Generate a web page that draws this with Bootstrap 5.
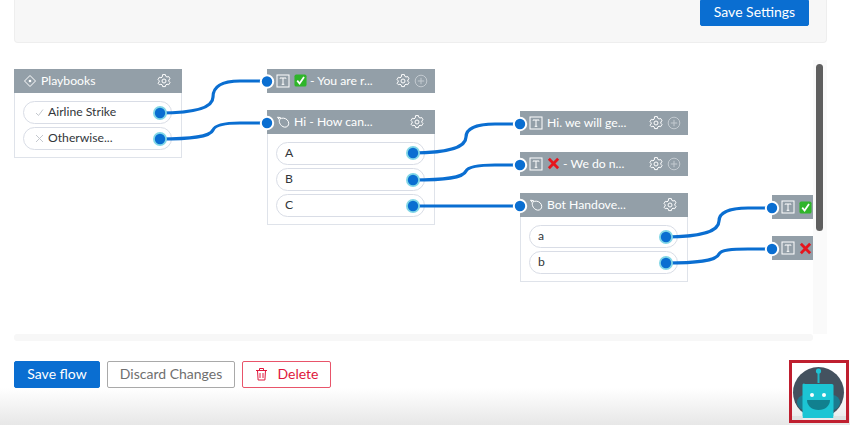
<!DOCTYPE html>
<html lang="en">
<head>
<meta charset="utf-8">
<title>Flow editor</title>
<link href="https://cdn.jsdelivr.net/npm/bootstrap@5.3.0/dist/css/bootstrap.min.css" rel="stylesheet">
<style>
html,body{height:425px;overflow:hidden}
body{font-family:Lato,"Noto Sans","Liberation Sans",sans-serif;font-size:13px;color:#32363a;position:relative;padding:0 23px 0 14px;
 background:linear-gradient(to bottom,#fff 0,#fff 388px,#e7e7e7 425px)}
.top-panel{height:43px;margin-bottom:17px;background:#f7f7f7;border:1px solid #eeeeee;border-top:0;border-radius:0 0 4px 4px;padding-right:17px}
.act-btn{height:27px;font-size:14px;line-height:1;padding:0 0 2px;border-radius:2px;display:inline-flex;align-items:center;justify-content:center;white-space:nowrap}
.act-blue{background:#0a6ed1;border:1px solid #0a6ed1;color:#fff}
.act-save{width:109px;height:26px;border-radius:0 0 2px 2px}
.act-flow{width:86px}
.act-gray{width:128px;background:#fff;border:1px solid #a9a9a9;color:#6f6f6f}
.act-red{width:89px;background:#fff;border:1px solid #e8546a;color:#e0173c;gap:10px}
.flow-row{height:274px}
.canvas-area{width:799px;height:274px;position:relative;overflow:hidden;background:#fff}
.v-track{width:14px;height:274px;background:#fafafa;padding:4px 4px 0 3px}
.v-thumb{width:7px;height:167px;background:#5f5f5f;border-radius:4px}
.h-track{width:799px;height:7px;background:#f7f7f7;margin-bottom:20px;border-radius:3px}
.fnode{position:absolute;width:168px}
.fhead{height:24px;background:#939fa8;color:#fff;font-size:12.2px;display:flex;align-items:center;padding:0 7px 0 9px;white-space:nowrap}
.fhead .ttl{flex:1;min-width:0;display:flex;align-items:center;gap:3px;margin-left:4px}
.fhead svg{flex:none}
.fbody{padding:8px 9px 7px 8px;display:flex;flex-direction:column;gap:3px;background:#fff;border:1px solid #dfe3ea;border-top:0}
.fpill{height:23px;border:1px solid #d9dde6;border-radius:12px;background:#fff;display:flex;align-items:center;padding-left:8px;font-size:12.2px;color:#32363a;line-height:1}
.fpill .ic{width:15px;margin-right:1px;color:#c4c8ce;display:flex;justify-content:center}
.n1{left:0;top:9px}.n2{left:253px;top:9px}.n3{left:253px;top:50px}
.n4{left:506px;top:51px}.n5{left:506px;top:92px}.n6{left:506px;top:133px}
.n7{left:758px;top:135px;width:60px}.n8{left:758px;top:176px;width:60px}
.wires{position:absolute;left:0;top:0;pointer-events:none}
.act-row{gap:7px}
.bot-box{position:absolute;left:789px;top:360px;width:60px;height:63px;border:3px solid #bf1f2f}
.bot-box svg{display:block}
</style>
</head>
<body>
<svg width="0" height="0" class="position-absolute">
 <defs>
  <symbol id="gear" viewBox="0 0 14 14"><path fill="none" stroke="currentColor" stroke-width="1" stroke-linejoin="round" d="M5.600 1h2.800l.4 1.700 1.200.7 1.700-.5 1.300 2.300-1.200 1.200v1.200l1.200 1.200-1.300 2.300-1.700-.5-1.200.7-.4 1.700H5.600l-.4-1.700-1.200-.7-1.700.5L1 9.600l1.200-1.200V7.200L1 6l1.300-2.300 1.700.5 1.200-.7z" transform="translate(0 -.4)"/><circle cx="7" cy="7" r="2" fill="none" stroke="currentColor"/></symbol>
  <symbol id="plus" viewBox="0 0 14 14"><circle cx="7" cy="7" r="5.800" fill="none" stroke="#c3cad0"/><path d="M7 3.800v6.400M3.800 7h6.400" stroke="#c3cad0"/></symbol>
  <symbol id="tbox" viewBox="0 0 14 14"><rect x="1" y="1" width="12" height="12" fill="none" stroke="currentColor"/><path d="M4 4.500V4h6v.5M7 4v6.300M5.700 10.300h2.600" fill="none" stroke="currentColor"/></symbol>
  <symbol id="lasso" viewBox="0 0 14 14"><path fill="none" stroke="currentColor" d="M4 4C6 2.500 9.500 3 11.300 5c1.800 2 1.900 4.700.3 6.200-1.600 1.500-4.300 1.200-6.200-.6C3.700 9 2.800 6.500 3.400 4.800L1.500 2.200l3 .4z"/></symbol>
  <symbol id="okbox" viewBox="0 0 14 14"><rect x=".5" y=".5" width="13" height="13" rx="2" fill="#2fb52a"/><path d="M3.500 7.200 6 10.200 10.800 3.300" fill="none" stroke="#fff" stroke-width="1.900"/></symbol>
  <symbol id="redx" viewBox="0 0 14 14"><path d="M2 2 12 12M12 2 2 12" stroke="#e5141c" stroke-width="3"/></symbol>
 </defs>
</svg>

<div class="top-panel d-flex justify-content-end align-items-start">
 <button class="act-btn act-blue act-save" type="button">Save Settings</button>
</div>

<div class="flow-row d-flex">
 <div class="canvas-area">
  <div class="fnode n1">
   <div class="fhead"><svg width="14" height="14" viewBox="0 0 14 14"><path d="M7 1.500 12.500 7 7 12.500 1.500 7z" fill="none" stroke="#fff"/><circle cx="7" cy="7" r="1.300" fill="#fff"/></svg><span class="ttl">Playbooks</span><svg class="me-1" width="14" height="14"><use href="#gear"/></svg></div>
   <div class="fbody">
    <div class="fpill"><span class="ic"><svg width="9" height="9" viewBox="0 0 9 9"><path d="M1 5l2.500 2.500L8 1.500" fill="none" stroke="currentColor"/></svg></span>Airline Strike</div>
    <div class="fpill"><span class="ic"><svg width="9" height="9" viewBox="0 0 9 9"><path d="M1 1l7 7M8 1 1 8" stroke="currentColor"/></svg></span>Otherwise...</div>
   </div>
  </div>
  <div class="fnode n2">
   <div class="fhead"><svg width="14" height="14"><use href="#tbox"/></svg><span class="ttl"><svg width="13" height="13"><use href="#okbox"/></svg> - You are r...</span><svg width="14" height="14"><use href="#gear"/></svg><svg class="ms-1" width="14" height="14"><use href="#plus"/></svg></div>
  </div>
  <div class="fnode n3">
   <div class="fhead"><svg width="14" height="14"><use href="#lasso"/></svg><span class="ttl">Hi - How can...</span><svg class="me-1" width="14" height="14"><use href="#gear"/></svg></div>
   <div class="fbody">
    <div class="fpill">A</div><div class="fpill">B</div><div class="fpill">C</div>
   </div>
  </div>
  <div class="fnode n4">
   <div class="fhead"><svg width="14" height="14"><use href="#tbox"/></svg><span class="ttl">Hi. we will ge...</span><svg width="14" height="14"><use href="#gear"/></svg><svg class="ms-1" width="14" height="14"><use href="#plus"/></svg></div>
  </div>
  <div class="fnode n5">
   <div class="fhead"><svg width="14" height="14"><use href="#tbox"/></svg><span class="ttl"><svg width="13" height="13"><use href="#redx"/></svg> - We do n...</span><svg width="14" height="14"><use href="#gear"/></svg><svg class="ms-1" width="14" height="14"><use href="#plus"/></svg></div>
  </div>
  <div class="fnode n6">
   <div class="fhead"><svg width="14" height="14"><use href="#lasso"/></svg><span class="ttl">Bot Handove...</span><svg class="me-1" width="14" height="14"><use href="#gear"/></svg></div>
   <div class="fbody">
    <div class="fpill">a</div><div class="fpill">b</div>
   </div>
  </div>
  <div class="fnode n7">
   <div class="fhead"><svg width="14" height="14"><use href="#tbox"/></svg><span class="ttl"><svg width="13" height="13"><use href="#okbox"/></svg></span></div>
  </div>
  <div class="fnode n8">
   <div class="fhead"><svg width="14" height="14"><use href="#tbox"/></svg><span class="ttl"><svg width="13" height="13"><use href="#redx"/></svg></span></div>
  </div>

  <svg class="wires" width="799" height="274" viewBox="14 60 799 274">
   <g fill="none" stroke="#0a6ed1" stroke-width="3.200" stroke-linecap="round">
    <path d="M160 113C195 113 213 108 213 97C213 85 225 81 240 81L267 81"/>
    <path d="M160 139C190 139 210 137 213 130C215 125 225 123 240 123L267 123"/>
    <path d="M413 153C445 153 466 148 466 137C466 128 478 124 495 124L520 124"/>
    <path d="M413 180C445 180 463 178 466 171C468 167 478 165 495 165L520 165"/>
    <path d="M413 206L520 206"/>
    <path d="M666 237C698 237 719 232 719 221C719 212 731 208 748 208L772 208"/>
    <path d="M666 263C696 263 716 261 719 254C721 250 731 249 748 249L772 249"/>
   </g>
   <g fill="#80d6e6">
    <circle cx="160" cy="113" r="7"/><circle cx="160" cy="139" r="7"/>
    <circle cx="413" cy="153" r="7"/><circle cx="413" cy="180" r="7"/><circle cx="413" cy="206" r="7"/>
    <circle cx="666" cy="237" r="7"/><circle cx="666" cy="263" r="7"/>
   </g>
   <g fill="#0a6ed1">
    <circle cx="160" cy="113" r="5.200"/><circle cx="160" cy="139" r="5.200"/>
    <circle cx="413" cy="153" r="5.200"/><circle cx="413" cy="180" r="5.200"/><circle cx="413" cy="206" r="5.200"/>
    <circle cx="666" cy="237" r="5.200"/><circle cx="666" cy="263" r="5.200"/>
   </g>
   <g fill="#0a6ed1" stroke="#fff" stroke-width="2">
    <circle cx="267" cy="81.500" r="6.200"/><circle cx="267" cy="123" r="6.200"/>
    <circle cx="520" cy="124" r="6.200"/><circle cx="520" cy="165" r="6.200"/><circle cx="520" cy="206" r="6.200"/>
    <circle cx="772" cy="208" r="6.200"/><circle cx="772" cy="249" r="6.200"/>
   </g>
  </svg>
 </div>
 <div class="v-track"><div class="v-thumb"></div></div>
</div>
<div class="h-track"></div>

<div class="d-flex act-row">
 <button class="act-btn act-blue act-flow" type="button">Save flow</button>
 <button class="act-btn act-gray" type="button">Discard Changes</button>
 <button class="act-btn act-red" type="button"><svg width="13" height="14" viewBox="0 0 13 14"><path d="M1 3.500h11M4.500 3.500V1.500h4v2M2.500 3.500l.6 9.500h6.800l.6-9.500M5 6v5M8 6v5" fill="none" stroke="currentColor"/></svg>Delete</button>
</div>

<div class="bot-box">
 <svg width="54" height="57" viewBox="0 0 54 57">
  <circle cx="26.500" cy="29.500" r="25.500" fill="#44525f"/>
  <rect x="5" y="32" width="43" height="15" rx="7.500" fill="#1b7c90"/>
  <path d="M26.500 20V9" stroke="#1fb6c6" stroke-width="2"/>
  <circle cx="26.500" cy="8" r="2.600" fill="#1fc3d3"/>
  <path d="M13 21h27a1.500 1.500 0 0 1 1.500 1.500V55h-31V22.500A1.500 1.500 0 0 1 13 21z" fill="#1cc5d4"/>
  <path d="M0 53h10.500v4H0zM41.500 53H54v4H41.500z" fill="#dfe2e2"/>
  <circle cx="20" cy="32" r="2" fill="#fff"/><circle cx="32" cy="32" r="2" fill="#fff"/>
  <path d="M15 37h23c0 6-5 10-11.500 10S15 43 15 37z" fill="#11808f"/>
 </svg>
</div>
</body>
</html>
